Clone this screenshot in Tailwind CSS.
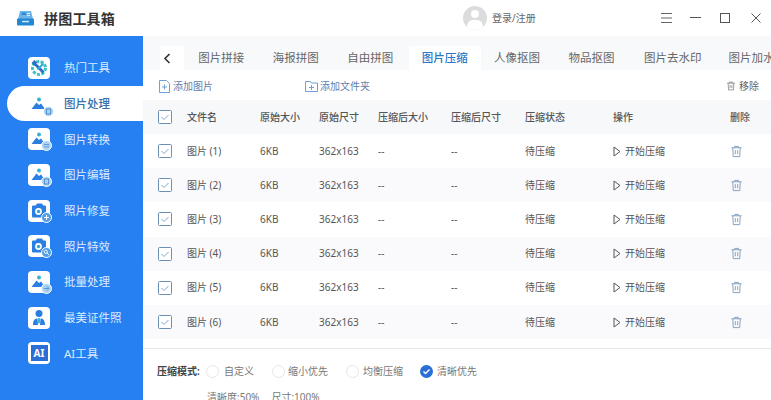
<!DOCTYPE html>
<html lang="zh"><head><meta charset="utf-8"><script src="https://cdn.jsdelivr.net/npm/@tailwindcss/browser@4"></script></head>
<body class="m-0">
<svg width="0" height="0" class="absolute"><defs>
<symbol id="mt" viewBox="0 0 22 22"><circle cx="11" cy="6.500" r="2" fill="#35b3d6"/><path d="M3.500 16 8.500 9.500l2.500 2.500 2-1.500 4 5.500z" fill="#2b7fe0"/></symbol>
<symbol id="cam" viewBox="0 0 22 22"><path d="M5 6.500h3l1.500-2h4l1 2h2.500v10H5z" fill="#2b7fe0" stroke="#2b7fe0" stroke-linejoin="round" stroke-width="2"/><circle cx="10.500" cy="11.500" r="3.400" fill="#fff"/><circle cx="10.500" cy="11.500" r="1.700" fill="#35a3d6"/></symbol>
<symbol id="trash" viewBox="0 0 14 14"><path d="M1.500 3h11M5 3V1.500h4V3M3 3l.5 9.500h7L11 3M5.700 5.500v4.500M8.300 5.500v4.500" fill="none" stroke="currentColor" stroke-width="1"/></symbol>
<symbol id="chk" viewBox="0 0 14 14"><rect x=".5" y=".5" width="13" height="13" rx="1" fill="#fff" stroke="#6d8fb3"/><path d="M3.500 7l2.500 2.500 4.500-4.500" fill="none" stroke="#7ea7d1" stroke-width="1"/></symbol>
<symbol id="play" viewBox="0 0 8 11"><path d="M1 1l6 4.500-6 4.500z" fill="none" stroke="#555" stroke-width="1"/></symbol>
<symbol id="bdgl" viewBox="0 0 11 11"><circle cx="5.500" cy="5.500" r="5" fill="#a9d2f2" stroke="#fff"/><path d="M3 4.500h5M3 6.800h5" stroke="#4f8fd0" stroke-width=".8"/></symbol>
<symbol id="bdge" viewBox="0 0 11 11"><circle cx="5.500" cy="5.500" r="5" fill="#a9d2f2" stroke="#fff"/><rect x="3.300" y="3" width="4.400" height="5" fill="none" stroke="#3f7fc4" stroke-width=".8"/></symbol>
<symbol id="bdgp" viewBox="0 0 11 11"><circle cx="5.500" cy="5.500" r="5" fill="#4fa0e6" stroke="#fff"/><path d="M3 5.500h5M5.500 3v5" stroke="#fff" stroke-width="1.100"/></symbol>
<symbol id="bdgs" viewBox="0 0 11 11"><circle cx="5.500" cy="5.500" r="5" fill="#4fa0e6" stroke="#fff"/><circle cx="4.800" cy="4.800" r="1.600" fill="none" stroke="#fff" stroke-width=".9"/><path d="M6 6l2 2" stroke="#fff" stroke-width=".9"/></symbol>
<symbol id="bdga" viewBox="0 0 11 11"><circle cx="5.500" cy="5.500" r="5" fill="#a9d2f2" stroke="#fff"/><path d="M3 5.500h4.500M6 3.500l2 2-2 2" fill="none" stroke="#4f8fd0" stroke-width=".9"/></symbol>
</defs></svg>
<div class="w-[771px] h-[400px] overflow-hidden flex flex-col bg-white text-[#555] font-['Noto_Sans','Noto_Sans_CJK_SC',sans-serif]">
  <header class="h-[36px] shrink-0 flex items-center bg-white">
    <svg class="ml-[17px] w-[17px] h-[15px]" viewBox="0 0 17 15"><path d="M3 0h11l2 8H1z" fill="#6db4ea"/><path d="M4.500 1.500h4.500v2.500H4.500z" fill="#2d8ad8"/><path d="M10 2h3v1h-3zM10 4h3v1h-3z" fill="#d6ecfb"/><rect y="7.500" width="17" height="7" rx="1" fill="#2388d4"/><rect x="5" y="9.800" width="7" height="1.500" fill="#cfe8fa"/></svg>
    <span class="ml-[10px] text-[14px] font-semibold text-[#333] tracking-[.2px]">拼图工具箱</span>
    <div class="ml-[348px] w-[24px] h-[24px] rounded-full bg-[#dcdcdc] relative overflow-hidden">
      <div class="absolute left-[8px] top-[4px] w-[8px] h-[8px] rounded-full bg-white"></div>
      <div class="absolute left-[4px] top-[14px] w-[16px] h-[12px] rounded-full bg-white"></div>
    </div>
    <span class="ml-[5px] text-[10px] text-[#666]">登录/注册</span>
    <svg class="ml-[125px] w-[11px] h-[10px]" viewBox="0 0 11 10"><path d="M0 .5h11M0 5h11M0 9.500h11" stroke="#666" fill="none"/></svg>
    <svg class="ml-[18px] w-[11px] h-[10px]" viewBox="0 0 11 10"><path d="M0 4.500h11" stroke="#555" fill="none"/></svg>
    <svg class="ml-[19px] w-[11px] h-[10px]" viewBox="0 0 11 10"><rect x=".5" y=".5" width="9" height="9" stroke="#555" fill="none"/></svg>
    <svg class="ml-[20px] w-[10px] h-[10px]" viewBox="0 0 10 10"><path d="M.5.500l9 9M9.500.500l-9 9" stroke="#555" fill="none"/></svg>
  </header>
  <div class="flex-1 flex min-h-0">
    <aside class="w-[143px] shrink-0 bg-[#2680f2] pt-[14px] text-[11.500px] text-[#dcebff]">
      <div class="h-[35.700px] ml-[7px] pl-[21px] flex items-center gap-[14px]"><div class="w-[22px] h-[22px] rounded-[4px] bg-white"><svg class="w-[22px] h-[22px]" viewBox="0 0 22 22"><circle cx="11" cy="11" r="6.500" fill="none" stroke="#3cc0c8" stroke-width="3" stroke-dasharray="3 1.500"/><path d="M6.500 6.500l9 9" stroke="#2b6fc8" stroke-width="2.800"/><path d="M5 4.500l2.500 2.500" stroke="#2b6fc8" stroke-width="4"/><path d="M15.500 6.500l-6 6" stroke="#35a8d0" stroke-width="2"/></svg></div>热门工具</div>
      <div class="h-[35.700px] ml-[7px] pl-[21px] flex items-center gap-[14px] bg-white rounded-l-full text-[#3a6ea8] font-medium"><div class="w-[22px] h-[22px] relative"><svg class="w-[22px] h-[22px]"><use href="#mt"/></svg><svg class="absolute right-[-4px] bottom-[-2px] w-[11px] h-[11px]"><use href="#bdge"/></svg></div>图片处理</div>
      <div class="h-[35.700px] ml-[7px] pl-[21px] flex items-center gap-[14px]"><div class="w-[22px] h-[22px] rounded-[4px] bg-white relative"><svg class="w-[22px] h-[22px]"><use href="#mt"/></svg><svg class="absolute right-[-2px] bottom-[-1px] w-[11px] h-[11px]"><use href="#bdgl"/></svg></div>图片转换</div>
      <div class="h-[35.700px] ml-[7px] pl-[21px] flex items-center gap-[14px]"><div class="w-[22px] h-[22px] rounded-[4px] bg-white relative"><svg class="w-[22px] h-[22px]"><use href="#mt"/></svg><svg class="absolute right-[-2px] bottom-[-1px] w-[11px] h-[11px]"><use href="#bdge"/></svg></div>图片编辑</div>
      <div class="h-[35.700px] ml-[7px] pl-[21px] flex items-center gap-[14px]"><div class="w-[22px] h-[22px] rounded-[4px] bg-white relative"><svg class="w-[22px] h-[22px]"><use href="#cam"/></svg><svg class="absolute right-[-2px] bottom-[-1px] w-[11px] h-[11px]"><use href="#bdgp"/></svg></div>照片修复</div>
      <div class="h-[35.700px] ml-[7px] pl-[21px] flex items-center gap-[14px]"><div class="w-[22px] h-[22px] rounded-[4px] bg-white relative"><svg class="w-[22px] h-[22px]"><use href="#cam"/></svg><svg class="absolute right-[-2px] bottom-[-1px] w-[11px] h-[11px]"><use href="#bdgs"/></svg></div>照片特效</div>
      <div class="h-[35.700px] ml-[7px] pl-[21px] flex items-center gap-[14px]"><div class="w-[22px] h-[22px] rounded-[4px] bg-white relative"><svg class="w-[22px] h-[22px]"><use href="#mt"/></svg><svg class="absolute right-[-2px] bottom-[-1px] w-[11px] h-[11px]"><use href="#bdga"/></svg></div>批量处理</div>
      <div class="h-[35.700px] ml-[7px] pl-[21px] flex items-center gap-[14px]"><div class="w-[22px] h-[22px] rounded-[4px] bg-white"><svg class="w-[22px] h-[22px]" viewBox="0 0 22 22"><circle cx="11" cy="6.500" r="3.500" fill="#2b7fe0"/><path d="M5 18c0-5 2-6.500 4.500-6.500L10 18zM17 18c0-5-2-6.500-4.500-6.500L12 18z" fill="#2b7fe0"/><path d="M10.200 11h1.600l.4 4-1.200 2-1.200-2z" fill="#35b3d6"/></svg></div>最美证件照</div>
      <div class="h-[35.700px] ml-[7px] pl-[21px] flex items-center gap-[14px]"><div class="w-[22px] h-[22px] rounded-[4px] bg-white flex items-center justify-center"><div class="w-[17px] h-[16px] bg-[#2b6fd6] text-white text-[10px] font-bold leading-[16px] text-center">AI</div></div>AI工具</div>
    </aside>
    <main class="flex-1 min-w-0 flex flex-col">
      <div class="h-[34px] shrink-0 bg-[#f8f9fb] flex items-end pl-[17px] overflow-hidden text-[11.500px] text-[#666]">
        <div class="w-[24px] h-[24px] shrink-0 bg-white flex items-center justify-start pl-[3px]"><svg class="w-[8px] h-[11px]" viewBox="0 0 8 11"><path d="M6.500 1 2 5.500l4.500 4.500" fill="none" stroke="#333" stroke-width="1.600"/></svg></div>
        <div class="w-[74.500px] h-[24px] shrink-0 text-center leading-[24px] whitespace-nowrap">图片拼接</div>
        <div class="w-[74.500px] h-[24px] shrink-0 text-center leading-[24px] whitespace-nowrap">海报拼图</div>
        <div class="w-[74.500px] h-[24px] shrink-0 text-center leading-[24px] whitespace-nowrap">自由拼图</div>
        <div class="w-[72px] mx-[1.250px] h-[24px] shrink-0 bg-white text-center leading-[24px] whitespace-nowrap text-[#2a77c8] font-medium">图片压缩</div>
        <div class="w-[74.500px] h-[24px] shrink-0 pl-[12px] leading-[24px] whitespace-nowrap">人像抠图</div>
        <div class="w-[74.500px] h-[24px] shrink-0 pl-[12px] leading-[24px] whitespace-nowrap">物品抠图</div>
        <div class="w-[74.500px] h-[24px] shrink-0 pl-[13px] leading-[24px] whitespace-nowrap">图片去水印</div>
        <div class="w-[74.500px] h-[24px] shrink-0 pl-[23px] leading-[24px] whitespace-nowrap">图片加水印</div>
      </div>
      <div class="h-[30px] shrink-0 flex items-center pl-[16px] pt-[2px] text-[10px] text-[#5f80ad]">
        <svg class="w-[11px] h-[13px]" viewBox="0 0 11 13"><path d="M.5.500h7l3 3v9h-10zM3 7h5M5.500 4.500v5" fill="none" stroke="#6f9fd6"/></svg>
        <span class="ml-[3px] w-[132px]">添加图片</span>
        <svg class="w-[13px] h-[11px]" viewBox="0 0 13 11"><path d="M.5.500h5l1 1.500h6v8.500H.5zM4 6.500h5M6.500 4v5" fill="none" stroke="#6f9fd6"/></svg>
        <span class="ml-[2px]">添加文件夹</span>
        <span class="ml-auto mr-[12px] flex items-center gap-[3px] text-[#666]"><svg class="w-[10px] h-[12px] text-[#777]"><use href="#trash"/></svg>移除</span>
      </div>
      <div class="h-[34px] shrink-0 bg-[#f7f8fa] pl-[15px] grid grid-cols-[29px_73px_59px_59px_73px_74px_88px_117px_1fr] items-center text-[10px] text-[#555] font-medium">
        <svg class="w-[14px] h-[14px]"><use href="#chk"/></svg><span>文件名</span><span>原始大小</span><span>原始尺寸</span><span>压缩后大小</span><span>压缩后尺寸</span><span>压缩状态</span><span>操作</span><span>删除</span>
      </div>
      <div class="h-[34.200px] shrink-0 bg-white pl-[15px] grid grid-cols-[29px_73px_59px_59px_73px_74px_88px_117px_1fr] items-center text-[10px]">
        <svg class="w-[14px] h-[14px]"><use href="#chk"/></svg><span>图片 (1)</span><span>6KB</span><span>362x163</span><span>--</span><span>--</span><span>待压缩</span><span class="flex items-center gap-[4px]"><svg class="w-[8px] h-[11px]"><use href="#play"/></svg>开始压缩</span><svg class="w-[13px] h-[13px] text-[#7e9cbc]"><use href="#trash"/></svg>
      </div>
      <div class="h-[34.200px] shrink-0 bg-[#fafafc] pl-[15px] grid grid-cols-[29px_73px_59px_59px_73px_74px_88px_117px_1fr] items-center text-[10px]">
        <svg class="w-[14px] h-[14px]"><use href="#chk"/></svg><span>图片 (2)</span><span>6KB</span><span>362x163</span><span>--</span><span>--</span><span>待压缩</span><span class="flex items-center gap-[4px]"><svg class="w-[8px] h-[11px]"><use href="#play"/></svg>开始压缩</span><svg class="w-[13px] h-[13px] text-[#7e9cbc]"><use href="#trash"/></svg>
      </div>
      <div class="h-[34.200px] shrink-0 bg-white pl-[15px] grid grid-cols-[29px_73px_59px_59px_73px_74px_88px_117px_1fr] items-center text-[10px]">
        <svg class="w-[14px] h-[14px]"><use href="#chk"/></svg><span>图片 (3)</span><span>6KB</span><span>362x163</span><span>--</span><span>--</span><span>待压缩</span><span class="flex items-center gap-[4px]"><svg class="w-[8px] h-[11px]"><use href="#play"/></svg>开始压缩</span><svg class="w-[13px] h-[13px] text-[#7e9cbc]"><use href="#trash"/></svg>
      </div>
      <div class="h-[34.200px] shrink-0 bg-[#fafafc] pl-[15px] grid grid-cols-[29px_73px_59px_59px_73px_74px_88px_117px_1fr] items-center text-[10px]">
        <svg class="w-[14px] h-[14px]"><use href="#chk"/></svg><span>图片 (4)</span><span>6KB</span><span>362x163</span><span>--</span><span>--</span><span>待压缩</span><span class="flex items-center gap-[4px]"><svg class="w-[8px] h-[11px]"><use href="#play"/></svg>开始压缩</span><svg class="w-[13px] h-[13px] text-[#7e9cbc]"><use href="#trash"/></svg>
      </div>
      <div class="h-[34.200px] shrink-0 bg-white pl-[15px] grid grid-cols-[29px_73px_59px_59px_73px_74px_88px_117px_1fr] items-center text-[10px]">
        <svg class="w-[14px] h-[14px]"><use href="#chk"/></svg><span>图片 (5)</span><span>6KB</span><span>362x163</span><span>--</span><span>--</span><span>待压缩</span><span class="flex items-center gap-[4px]"><svg class="w-[8px] h-[11px]"><use href="#play"/></svg>开始压缩</span><svg class="w-[13px] h-[13px] text-[#7e9cbc]"><use href="#trash"/></svg>
      </div>
      <div class="h-[34.200px] shrink-0 bg-[#fafafc] pl-[15px] grid grid-cols-[29px_73px_59px_59px_73px_74px_88px_117px_1fr] items-center text-[10px]">
        <svg class="w-[14px] h-[14px]"><use href="#chk"/></svg><span>图片 (6)</span><span>6KB</span><span>362x163</span><span>--</span><span>--</span><span>待压缩</span><span class="flex items-center gap-[4px]"><svg class="w-[8px] h-[11px]"><use href="#play"/></svg>开始压缩</span><svg class="w-[13px] h-[13px] text-[#7e9cbc]"><use href="#trash"/></svg>
      </div>
      <div class="h-[9px] shrink-0 bg-white"></div>
      <div class="flex-1 border-t border-[#e6e8ec] text-[10px] text-[#777] pl-[14px]">
        <div class="h-[44px] flex items-center">
          <span class="w-[49px] font-semibold text-[#444]">压缩模式:</span>
          <span class="w-[13px] h-[13px] rounded-full border border-[#e6e6e6]"></span><span class="ml-[5px] w-[48px]">自定义</span>
          <span class="w-[13px] h-[13px] rounded-full border border-[#e6e6e6]"></span><span class="ml-[3px] w-[58px]">缩小优先</span>
          <span class="w-[13px] h-[13px] rounded-full border border-[#e6e6e6]"></span><span class="ml-[4px] w-[57px]">均衡压缩</span>
          <svg class="w-[13px] h-[13px]" viewBox="0 0 13 13"><circle cx="6.500" cy="6.500" r="6.500" fill="#2a6fd6"/><path d="M3.500 6.500l2 2 4-4" fill="none" stroke="#fff" stroke-width="1.500"/></svg><span class="ml-[4px]">清晰优先</span>
        </div>
        <div class="pl-[50px] leading-[14px] mt-[-3px] flex gap-[12px]"><span>清晰度:50%</span><span>尺寸:100%</span></div>
      </div>
    </main>
  </div>
</div>
</body></html>
